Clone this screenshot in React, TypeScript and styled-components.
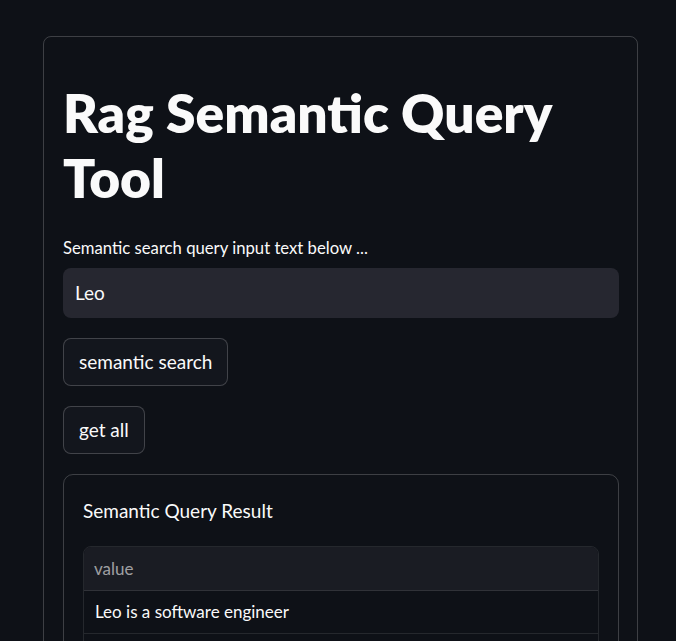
import React from "react";
import styled, { createGlobalStyle } from "styled-components";

const GlobalStyle = createGlobalStyle`
  html, body {
    margin: 0;
    padding: 0;
    background: #0e1117;
    color: #fafafa;
    font-family: Lato, "Noto Sans", sans-serif;
  }
  * { box-sizing: border-box; }
`;

const Page = styled.main`
  padding: 36px 38px 0 43px;
`;

const Card = styled.section`
  border: 1px solid rgba(250, 250, 250, 0.2);
  border-radius: 8px;
  padding: 43px 18px 40px 19px;
  display: flex;
  flex-direction: column;
`;

const Title = styled.h1`
  margin: 0 0 27px;
  font-size: 53.3px;
  line-height: 64.8px;
  font-weight: 800;
  color: #fafafa;
`;

const Label = styled.label`
  display: block;
  font-size: 16.7px;
  line-height: 22px;
  margin-bottom: 9px;
  color: #fafafa;
`;

const Input = styled.input`
  width: 100%;
  height: 50px;
  border: none;
  border-radius: 8px;
  background: #262730;
  color: #fafafa;
  padding: 0 12px;
  font-family: inherit;
  font-size: 19px;
  outline: none;
`;

const Button = styled.button`
  align-self: flex-start;
  height: 48px;
  margin-top: 20px;
  padding: 0 15px;
  border: 1px solid rgba(250, 250, 250, 0.2);
  border-radius: 8px;
  background: #13161d;
  color: #fafafa;
  font-family: inherit;
  font-size: 19px;
  cursor: pointer;
`;

const ResultCard = styled.div`
  margin-top: 20px;
  border: 1px solid rgba(250, 250, 250, 0.2);
  border-radius: 10px;
  padding: 24px 19px 19px;
`;

const ResultTitle = styled.div`
  font-size: 19px;
  line-height: 24px;
  margin-bottom: 23px;
`;

const Table = styled.div`
  border: 1px solid rgba(250, 250, 250, 0.1);
  border-radius: 8px;
  overflow: hidden;
`;

const HeaderCell = styled.div`
  height: 44px;
  display: flex;
  align-items: center;
  padding: 0 10px;
  background: #1a1c23;
  color: rgba(250, 250, 250, 0.6);
  font-size: 17px;
  border-bottom: 1px solid rgba(250, 250, 250, 0.1);
`;

const Row = styled.div`
  height: 43px;
  display: flex;
  align-items: center;
  padding: 0 11px;
  font-size: 17px;
  color: #fafafa;
  border-bottom: 1px solid rgba(250, 250, 250, 0.1);
  &:last-child { border-bottom: none; }
`;

export default function App() {
  return (
    <>
      <GlobalStyle />
      <Page>
        <Card>
          <Title>Rag Semantic Query Tool</Title>
          <Label>Semantic search query input text below ...</Label>
          <Input defaultValue="Leo" />
          <Button>semantic search</Button>
          <Button>get all</Button>
          <ResultCard>
            <ResultTitle>Semantic Query Result</ResultTitle>
            <Table>
              <HeaderCell>value</HeaderCell>
              <Row>Leo is a software engineer</Row>
              <Row>&nbsp;</Row>
            </Table>
          </ResultCard>
        </Card>
      </Page>
    </>
  );
}
